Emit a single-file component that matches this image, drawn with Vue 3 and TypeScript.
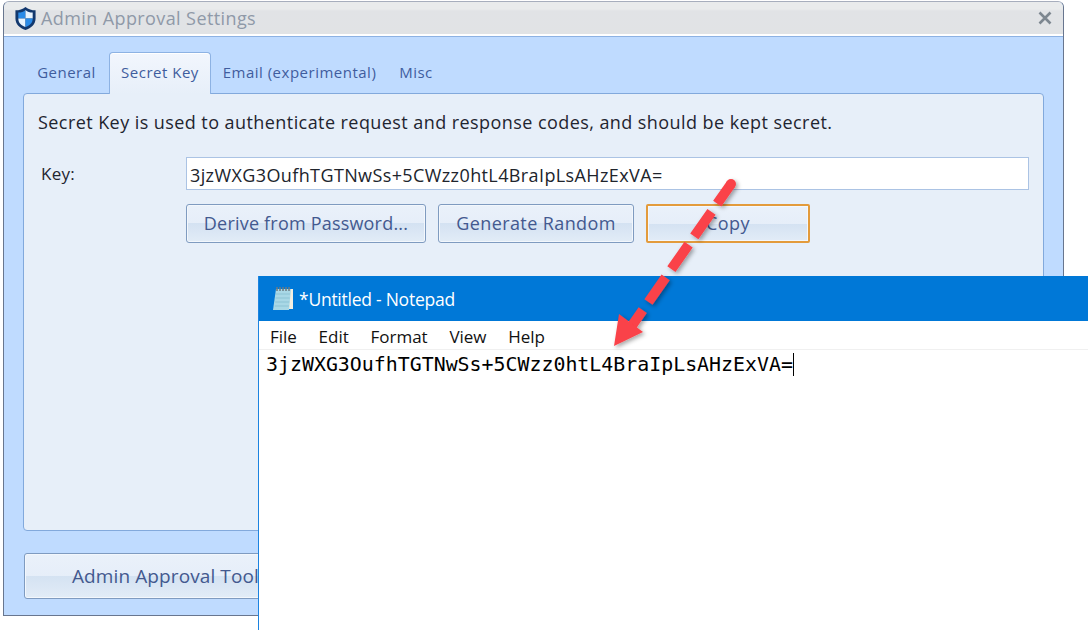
<template>
  <div class="stage">
    <section class="settings">
      <header class="settings-title">
        <svg class="shield" viewBox="0 0 24 26" width="23" height="25">
          <path d="M12 1 C9 3.500 5.500 4.500 1.500 4.500 V13 C1.500 19 6 23 12 25 C18 23 22.500 19 22.500 13 V4.500 C18.500 4.500 15 3.500 12 1 Z" fill="#12386e" />
          <path d="M12 4 V13 H4.500 V6.800 C7.500 6.800 10 5.800 12 4 Z" fill="#2a8be8" />
          <path d="M12 4 C14 5.800 16.500 6.800 19.500 6.800 V13 H12 Z" fill="#e8f4ff" />
          <path d="M4.500 13 H12 V22 C8 20.500 4.500 18 4.500 13 Z" fill="#e8f4ff" />
          <path d="M12 13 H19.500 C19.500 18 16 20.500 12 22 Z" fill="#2a8be8" />
        </svg>
        <span class="title-text">Admin Approval Settings</span>
        <svg class="close" viewBox="0 0 14 14" width="14" height="14">
          <path d="M1.500 1.500 L12.500 12.500 M12.500 1.500 L1.500 12.500" stroke="#7d8790" stroke-width="2.600" fill="none" />
        </svg>
      </header>

      <div class="settings-body">
        <nav class="tabs">
          <span v-for="tab in tabs" :key="tab" class="tab" :class="{ active: tab === activeTab }">{{ tab }}</span>
        </nav>
        <div class="panel">
          <p class="hint">Secret Key is used to authenticate request and response codes, and should be kept secret.</p>
          <div class="key-row">
            <label class="key-label">Key:</label>
            <div class="key-input">{{ secretKey }}</div>
          </div>
          <div class="actions">
            <button class="btn derive">Derive from Password...</button>
            <button class="btn generate">Generate Random</button>
            <button class="btn copy">Copy</button>
          </div>
        </div>
        <button class="btn tool-btn"><span>Admin Approval Tool</span></button>
      </div>
    </section>

    <section class="notepad">
      <header class="np-title">
        <svg class="np-icon" viewBox="0 0 24 26" width="24" height="26">
          <path d="M6 3 H22 V23 H3 Z" fill="#f3efe2" />
          <path d="M5 3 H20 L18 24 H2 Z" fill="#a9d8e6" />
          <path d="M5 8 H19 M4.600 12 H18.700 M4.200 16 H18.300 M3.800 20 H18" stroke="#8cc3d4" stroke-width="1" />
          <path d="M6 1 V5 M9 1 V5 M12 1 V5 M15 1 V5 M18 1 V5" stroke="#6c7a80" stroke-width="1.500" />
        </svg>
        <span>*Untitled - Notepad</span>
      </header>
      <div class="np-menu">
        <span v-for="item in menu" :key="item">{{ item }}</span>
      </div>
      <div class="np-text">{{ secretKey }}<i class="caret"></i></div>
    </section>

    <svg class="arrow" viewBox="0 0 1088 630" width="1088" height="630">
      <defs>
        <filter id="arrow-shadow" x="-20%" y="-20%" width="140%" height="140%">
          <feDropShadow dx="2" dy="2" stdDeviation="2" flood-color="#000" flood-opacity="0.35" />
        </filter>
      </defs>
      <g filter="url(#arrow-shadow)">
        <path d="M731 184 L631 327" stroke="#fa4248" stroke-width="10" stroke-dasharray="24 10 30 10 30 10 30 10 20" fill="none" />
        <circle cx="731" cy="184" r="5" fill="#fa4248" />
        <path d="M614 346 L619 314 L643 332 Z" fill="#fa4248" />
      </g>
    </svg>
  </div>
</template>

<script setup lang="ts">
  const tabs: string[] = ['General', 'Secret Key', 'Email (experimental)', 'Misc'];
  const activeTab = 'Secret Key';
  const menu: string[] = ['File', 'Edit', 'Format', 'View', 'Help'];
  const secretKey = '3jzWXG3OufhTGTNwSs+5CWzz0htL4BraIpLsAHzExVA=';
</script>

<style>
  html,
  body {
    margin: 0;
    background: #fff;
    overflow: hidden;
  }
</style>

<style scoped>
  .stage {
    position: relative;
    width: 1088px;
    height: 630px;
    overflow: hidden;
    padding: 1px 0 0 3px;
    box-sizing: border-box;
    font-family: "Open Sans", "Noto Sans", sans-serif;
  }

  .settings {
    width: 1061px;
    height: 615px;
    box-sizing: border-box;
    display: flex;
    flex-direction: column;
    border: 1px solid #68768f;
    border-top-color: #a7aebd;
    border-radius: 6px 6px 0 0;
    background: #bfdbff;
  }

  .settings-title {
    height: 34px;
    flex: none;
    box-sizing: border-box;
    display: flex;
    align-items: center;
    padding: 0 9px 0 10px;
    border-bottom: 2px solid #fff;
    box-shadow: 0 1px 0 #8db2e3;
    border-radius: 5px 5px 0 0;
    background: linear-gradient(#e9ebec 0, #e9ebec 7px, #e1e3e6 9px, #e1e3e5 100%);
  }

  .shield {
    flex: none;
    margin-right: 4px;
  }

  .title-text {
    font-size: 18px;
    letter-spacing: 0.4px;
    color: #8f99a8;
  }

  .close {
    margin-left: auto;
    margin-right: 2px;
  }

  .settings-body {
    flex: 1;
    display: flex;
    flex-direction: column;
    padding: 16px 19px 17px;
    min-height: 0;
  }

  .tabs {
    display: flex;
    height: 41px;
    flex: none;
    padding-left: 1px;
  }

  .tab {
    display: flex;
    align-items: center;
    justify-content: center;
    box-sizing: border-box;
    height: 41px;
    padding-bottom: 1px;
    font-size: 15px;
    letter-spacing: 0.5px;
    color: #3f5d9e;
  }

  .tab:nth-child(1) {
    width: 85px;
  }

  .tab:nth-child(2) {
    width: 102px;
    position: relative;
    z-index: 1;
    height: 42px;
    padding-bottom: 3px;
    border: 1px solid #8db2e3;
    border-bottom: 0;
    border-radius: 4px 4px 0 0;
    box-shadow: inset 0 1px 0 #fff;
    background: linear-gradient(#f2f6fd, #e7eff9);
  }

  .tab:nth-child(3) {
    width: 177px;
  }

  .tab:nth-child(4) {
    width: 56px;
  }

  .panel {
    height: 438px;
    flex: none;
    box-sizing: border-box;
    padding: 16px 13px 0 14px;
    border: 1px solid #82a9dc;
    border-radius: 4px;
    background: #e7eff9;
  }

  .hint {
    margin: 0;
    font-size: 18px;
    letter-spacing: 0.43px;
    line-height: 24px;
    color: #1f2530;
    white-space: nowrap;
  }

  .key-row {
    display: flex;
    align-items: center;
    margin-top: 23px;
  }

  .key-label {
    width: 148px;
    padding-left: 3px;
    box-sizing: border-box;
    font-size: 17px;
    letter-spacing: 0.3px;
    color: #1f2530;
  }

  .key-input {
    width: 843px;
    height: 33px;
    box-sizing: border-box;
    padding-left: 3px;
    line-height: 35px;
    font-size: 18px;
    letter-spacing: 0.39px;
    color: #20242c;
    border: 1px solid #abc3e4;
    background: #fff;
    white-space: nowrap;
  }

  .actions {
    display: flex;
    gap: 12px;
    margin: 14px 0 0 148px;
  }

  .btn {
    height: 39px;
    box-sizing: border-box;
    padding: 0 0 2px;
    font-family: inherit;
    font-size: 18px;
    letter-spacing: 0.4px;
    color: #43598f;
    border: 1px solid #7f9bc0;
    border-radius: 3px;
    box-shadow: inset 0 0 0 1px #f3f7fc;
    background: linear-gradient(#eaf1fa 0, #e6eef9 50%, #d4e2f2 50%, #e2ecf7 100%);
  }

  .derive {
    width: 240px;
    letter-spacing: 0.2px;
  }

  .generate {
    width: 196px;
  }

  .copy {
    width: 164px;
    border: 2px solid #e39b3c;
    border-radius: 2px;
  }

  .tool-btn {
    width: 1020px;
    height: 46px;
    margin: 22px 0 0 1px;
    flex: none;
    padding: 0;
    text-align: left;
    font-size: 19px;
    letter-spacing: 0.1px;
  }

  .tool-btn span {
    margin-left: 47px;
  }

  .notepad {
    position: absolute;
    left: 258px;
    top: 276px;
    width: 840px;
    height: 370px;
    border-left: 1px solid #1c83e0;
    background: #fff;
  }

  .np-title {
    height: 45px;
    display: flex;
    align-items: center;
    padding-left: 12px;
    font-size: 17.500px;
    letter-spacing: -0.25px;
    color: #fff;
    background: #0078d7;
  }

  .np-icon {
    margin-right: 4px;
  }

  .np-menu {
    height: 29px;
    display: flex;
    align-items: center;
    gap: 21.700px;
    padding: 3px 0 0 11px;
    box-sizing: border-box;
    font-size: 17px;
    color: #111;
    border-bottom: 1px solid #f0f0f0;
  }

  .np-text {
    position: relative;
    padding: 3px 0 0 7px;
    font-family: "DejaVu Sans Mono", "Liberation Mono", monospace;
    font-size: 19.900px;
    line-height: 24px;
    color: #000;
    white-space: nowrap;
  }

  .caret {
    display: inline-block;
    width: 1px;
    height: 23px;
    vertical-align: -5px;
    background: #000;
  }

  .arrow {
    position: absolute;
    left: 0;
    top: 0;
    pointer-events: none;
  }
</style>
